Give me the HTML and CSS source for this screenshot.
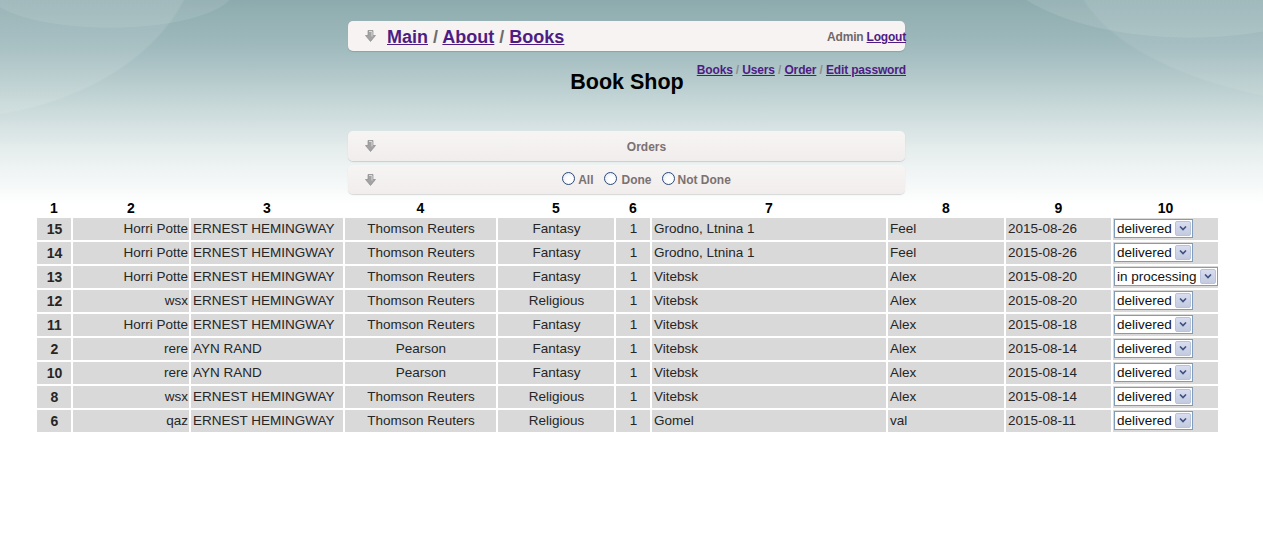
FILE: index.html
```html
<!DOCTYPE html>
<html lang="en">
<head>
<meta charset="utf-8">
<title>Book Shop</title>
<link rel="stylesheet" href="styles.css">
</head>
<body>
<div class="page">
  <header class="topbar">
    <svg class="arrow" width="11" height="12" viewBox="0 0 11 12"><path d="M3 .5H8V5.5H10.5L5.5 11.5.5 5.5H3Z" fill="#a3a3a3" stroke="#8c8c8c" stroke-width=".7"/><path d="M4 1.5H7V6.5" fill="none" stroke="#dcdcdc" stroke-width="1"/></svg>
    <nav class="crumbs"><a href="#">Main</a> / <a href="#">About</a> / <a href="#">Books</a></nav>
    <div class="user">Admin <a href="#">Logout</a></div>
  </header>

  <div class="subhead">
    <div></div>
    <h1 class="title">Book Shop</h1>
    <nav class="admin-links"><a href="#">Books</a> / <a href="#">Users</a> / <a href="#">Order</a> / <a href="#">Edit password</a></nav>
  </div>

  <div class="panel panel-orders">
    <svg class="arrow" width="11" height="12" viewBox="0 0 11 12"><path d="M3 .5H8V5.5H10.5L5.5 11.5.5 5.5H3Z" fill="#a3a3a3" stroke="#8c8c8c" stroke-width=".7"/><path d="M4 1.5H7V6.5" fill="none" stroke="#dcdcdc" stroke-width="1"/></svg>
    <div class="panel-body">Orders</div>
  </div>
  <div class="panel panel-filter">
    <svg class="arrow" width="11" height="12" viewBox="0 0 11 12"><path d="M3 .5H8V5.5H10.5L5.5 11.5.5 5.5H3Z" fill="#a3a3a3" stroke="#8c8c8c" stroke-width=".7"/><path d="M4 1.5H7V6.5" fill="none" stroke="#dcdcdc" stroke-width="1"/></svg>
    <div class="panel-body filters">
      <label class="opt"><span class="radio"></span>All</label>
      <label class="opt opt-done"><span class="radio"></span>Done</label>
      <label class="opt"><span class="radio"></span>Not Done</label>
    </div>
  </div>

  <table class="orders">
    <colgroup>
      <col class="c1"><col class="c2"><col class="c3"><col class="c4"><col class="c5">
      <col class="c6"><col class="c7"><col class="c8"><col class="c9"><col class="c10">
    </colgroup>
    <thead>
      <tr><th>1</th><th>2</th><th>3</th><th>4</th><th>5</th><th>6</th><th>7</th><th>8</th><th>9</th><th>10</th></tr>
    </thead>
    <tbody>
      <tr><td class="id">15</td><td class="r">Horri Potte</td><td>ERNEST HEMINGWAY</td><td class="c">Thomson Reuters</td><td class="c">Fantasy</td><td class="c">1</td><td>Grodno, Ltnina 1</td><td>Feel</td><td>2015-08-26</td><td class="st"><span class="dd"><span class="dd-val">delivered</span><span class="dd-btn"><svg width="8" height="5" viewBox="0 0 8 5"><path d="M1 .5 4 3.5 7 .5" fill="none" stroke="#3d5282" stroke-width="1.6"/></svg></span></span></td></tr>
      <tr><td class="id">14</td><td class="r">Horri Potte</td><td>ERNEST HEMINGWAY</td><td class="c">Thomson Reuters</td><td class="c">Fantasy</td><td class="c">1</td><td>Grodno, Ltnina 1</td><td>Feel</td><td>2015-08-26</td><td class="st"><span class="dd"><span class="dd-val">delivered</span><span class="dd-btn"><svg width="8" height="5" viewBox="0 0 8 5"><path d="M1 .5 4 3.5 7 .5" fill="none" stroke="#3d5282" stroke-width="1.6"/></svg></span></span></td></tr>
      <tr><td class="id">13</td><td class="r">Horri Potte</td><td>ERNEST HEMINGWAY</td><td class="c">Thomson Reuters</td><td class="c">Fantasy</td><td class="c">1</td><td>Vitebsk</td><td>Alex</td><td>2015-08-20</td><td class="st"><span class="dd"><span class="dd-val">in processing</span><span class="dd-btn"><svg width="8" height="5" viewBox="0 0 8 5"><path d="M1 .5 4 3.5 7 .5" fill="none" stroke="#3d5282" stroke-width="1.6"/></svg></span></span></td></tr>
      <tr><td class="id">12</td><td class="r">wsx</td><td>ERNEST HEMINGWAY</td><td class="c">Thomson Reuters</td><td class="c">Religious</td><td class="c">1</td><td>Vitebsk</td><td>Alex</td><td>2015-08-20</td><td class="st"><span class="dd"><span class="dd-val">delivered</span><span class="dd-btn"><svg width="8" height="5" viewBox="0 0 8 5"><path d="M1 .5 4 3.5 7 .5" fill="none" stroke="#3d5282" stroke-width="1.6"/></svg></span></span></td></tr>
      <tr><td class="id">11</td><td class="r">Horri Potte</td><td>ERNEST HEMINGWAY</td><td class="c">Thomson Reuters</td><td class="c">Fantasy</td><td class="c">1</td><td>Vitebsk</td><td>Alex</td><td>2015-08-18</td><td class="st"><span class="dd"><span class="dd-val">delivered</span><span class="dd-btn"><svg width="8" height="5" viewBox="0 0 8 5"><path d="M1 .5 4 3.5 7 .5" fill="none" stroke="#3d5282" stroke-width="1.6"/></svg></span></span></td></tr>
      <tr><td class="id">2</td><td class="r">rere</td><td>AYN RAND</td><td class="c">Pearson</td><td class="c">Fantasy</td><td class="c">1</td><td>Vitebsk</td><td>Alex</td><td>2015-08-14</td><td class="st"><span class="dd"><span class="dd-val">delivered</span><span class="dd-btn"><svg width="8" height="5" viewBox="0 0 8 5"><path d="M1 .5 4 3.5 7 .5" fill="none" stroke="#3d5282" stroke-width="1.6"/></svg></span></span></td></tr>
      <tr><td class="id">10</td><td class="r">rere</td><td>AYN RAND</td><td class="c">Pearson</td><td class="c">Fantasy</td><td class="c">1</td><td>Vitebsk</td><td>Alex</td><td>2015-08-14</td><td class="st"><span class="dd"><span class="dd-val">delivered</span><span class="dd-btn"><svg width="8" height="5" viewBox="0 0 8 5"><path d="M1 .5 4 3.5 7 .5" fill="none" stroke="#3d5282" stroke-width="1.6"/></svg></span></span></td></tr>
      <tr><td class="id">8</td><td class="r">wsx</td><td>ERNEST HEMINGWAY</td><td class="c">Thomson Reuters</td><td class="c">Religious</td><td class="c">1</td><td>Vitebsk</td><td>Alex</td><td>2015-08-14</td><td class="st"><span class="dd"><span class="dd-val">delivered</span><span class="dd-btn"><svg width="8" height="5" viewBox="0 0 8 5"><path d="M1 .5 4 3.5 7 .5" fill="none" stroke="#3d5282" stroke-width="1.6"/></svg></span></span></td></tr>
      <tr><td class="id">6</td><td class="r">qaz</td><td>ERNEST HEMINGWAY</td><td class="c">Thomson Reuters</td><td class="c">Religious</td><td class="c">1</td><td>Gomel</td><td>val</td><td>2015-08-11</td><td class="st"><span class="dd"><span class="dd-val">delivered</span><span class="dd-btn"><svg width="8" height="5" viewBox="0 0 8 5"><path d="M1 .5 4 3.5 7 .5" fill="none" stroke="#3d5282" stroke-width="1.6"/></svg></span></span></td></tr>
    </tbody>
  </table>
</div>
</body>
</html>
```
FILE: styles.css
```css
html {
  background: #fff;
}
body {
  margin: 0;
  min-height: 547px;
  font-family: Arial, "Liberation Sans", sans-serif;
  color: #1a1a1a;
  background:
    radial-gradient(ellipse 125px 38px at 110px -10px, rgba(255,255,255,.09) 98%, rgba(255,255,255,0) 100%),
    radial-gradient(ellipse 260px 180px at -60px -60px, rgba(255,255,255,.10) 99%, rgba(255,255,255,0) 100%),
    radial-gradient(ellipse 200px 88px at 1190px -50px, rgba(255,255,255,.10) 99%, rgba(255,255,255,0) 100%),
    radial-gradient(ellipse 330px 150px at 1400px -40px, rgba(255,255,255,.08) 99%, rgba(255,255,255,0) 100%),
    linear-gradient(#8dabae 0px, #a1bbbe 50px, #c4d5d6 100px, #e6eded 150px, #ffffff 205px);
  background-repeat: no-repeat;
  background-color: #fff;
}

.page {
  padding-top: 21px;
}

a {
  color: #4e1d83;
}

.arrow {
  flex: none;
  display: block;
}

/* top bar */
.topbar {
  box-sizing: border-box;
  margin-left: 348px;
  width: 557px;
  height: 30px;
  display: flex;
  align-items: center;
  padding-left: 17px;
  padding-top: 2px;
  background: #f7f3f3;
  border-radius: 5px;
  box-shadow: 0 1px 1px rgba(80, 90, 90, .25);
}
.topbar .arrow {
  margin-right: 11px;
  margin-top: -2px;
}
.crumbs {
  font-size: 18px;
  font-weight: bold;
  color: #6d6d6d;
  line-height: 20px;
}
.user {
  margin-left: auto;
  margin-right: -1px;
  font-size: 12px;
  font-weight: bold;
  color: #6f6868;
  letter-spacing: -0.2px;
}

/* subheader */
.subhead {
  margin-left: 348px;
  width: 558px;
  margin-top: 12px;
  display: grid;
  grid-template-columns: 1fr auto 1fr;
  align-items: start;
}
.title {
  margin: 7px 0 0;
  font-size: 21.5px;
  line-height: 25px;
  font-weight: bold;
  color: #000;
}
.admin-links {
  justify-self: end;
  font-size: 12px;
  line-height: 14px;
  font-weight: bold;
  letter-spacing: -0.15px;
  color: #8f8f8f;
}

/* panels */
.panel {
  box-sizing: border-box;
  margin-left: 348px;
  width: 557px;
  display: flex;
  align-items: center;
  padding-left: 17px;
  background: linear-gradient(#f7f4f4, #f1eded);
  border-radius: 5px;
  box-shadow: 0 1px 1px rgba(120, 120, 120, .28);
  font-size: 12px;
  font-weight: bold;
  color: #7b7171;
}
.panel-orders {
  margin-top: 36px;
  height: 30px;
}
.panel-orders .panel-body {
  padding-top: 2px;
}
.panel-filter {
  margin-top: 4px;
  height: 29px;
}
.panel-body {
  flex: 1;
  margin-left: 12px;
  text-align: center;
}
.filters {
  display: flex;
  justify-content: center;
  align-items: center;
  padding-top: 1px;
}
.opt {
  display: inline-flex;
  align-items: center;
  margin-right: 10px;
}
.opt:last-child {
  margin-right: 0;
}
.opt-done .radio {
  margin-right: 5px;
}
.radio {
  box-sizing: border-box;
  width: 13px;
  height: 13px;
  margin-right: 3px;
  margin-top: -3px;
  border: 1px solid #2a4a7a;
  border-radius: 50%;
  background: radial-gradient(circle at 60% 60%, #ffffff 30%, #dfe3ea 100%);
}

/* table */
.orders {
  margin-left: 35px;
  margin-top: 4px;
  border-collapse: separate;
  border-spacing: 2px;
  table-layout: fixed;
  width: 1185px;
  font-size: 13.5px;
}
.c1 { width: 34px; }
.c2 { width: 116px; }
.c3 { width: 152px; }
.c4 { width: 151px; }
.c5 { width: 116px; }
.c6 { width: 34px; }
.c7 { width: 234px; }
.c8 { width: 116px; }
.c9 { width: 105px; }
.c10 { width: 105px; }

.orders th {
  height: 16px;
  padding: 0;
  font-size: 14px;
  line-height: 16px;
  font-weight: bold;
  color: #000;
  text-align: center;
}
.orders td {
  height: 22px;
  padding: 0 1px 0 2px;
  background: #d9d9d9;
  white-space: nowrap;
  overflow: hidden;
  line-height: 22px;
  color: #262626;
}
.orders td.id {
  text-align: center;
  font-weight: bold;
  font-size: 14px;
}
.orders td.r {
  text-align: right;
}
.orders td.c {
  text-align: center;
}
.orders td.st {
  padding-left: 1px;
  overflow: visible;
}

/* dropdown look-alike */
.dd {
  display: inline-flex;
  align-items: center;
  box-sizing: border-box;
  height: 19px;
  vertical-align: middle;
  margin-top: -2px;
  background: #fff;
  border: 1px solid #7f9db9;
  line-height: 17px;
  color: #111;
}
.dd-val {
  padding: 0 3px 0 2px;
}
.dd-btn {
  box-sizing: border-box;
  width: 16px;
  height: 15px;
  margin-right: 1px;
  display: flex;
  align-items: center;
  justify-content: center;
  background: linear-gradient(#d8dcee, #c4cbe0);
  border: 1px solid #b7c3dd;
  border-radius: 2px;
}
.dd-btn svg {
  display: block;
}
```
